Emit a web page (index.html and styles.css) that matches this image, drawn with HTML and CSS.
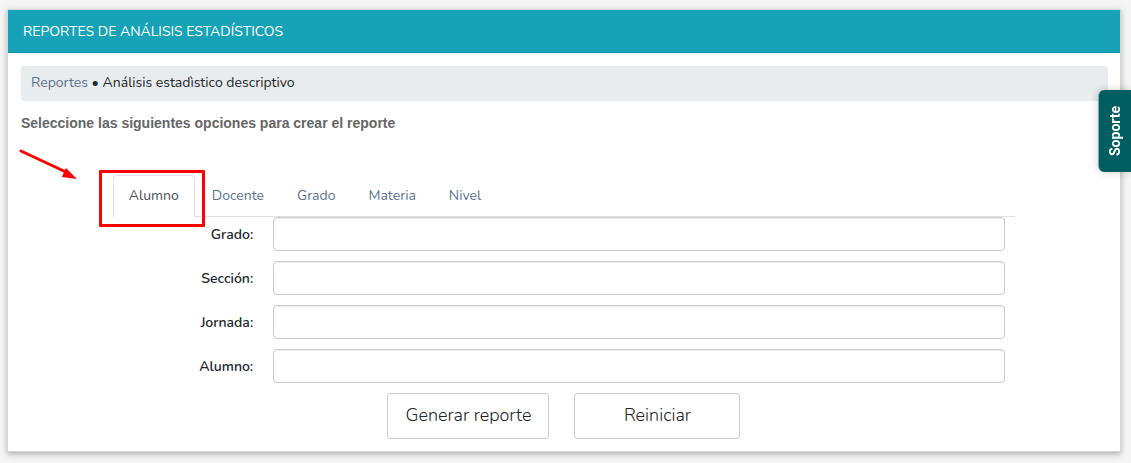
FILE: index.html
```html
<!DOCTYPE html>
<html lang="es">

<head>
	<meta charset="UTF-8" />
	<meta name="viewport" content="width=device-width, initial-scale=1.0" />
	<title>Reportes de análisis estadísticos</title>
	<link rel="stylesheet" href="styles.css">
</head>

<body>
	<main class="card">
		<h1 class="card__header">REPORTES DE ANÁLISIS ESTADÍSTICOS</h1>
		<div class="card__body">
			<nav class="breadcrumb">
				<a class="breadcrumb__link" href="#">Reportes</a> • <span>Análisis estadìstico descriptivo</span>
			</nav>
			<h2 class="card__subtitle">Seleccione las siguientes opciones para crear el reporte</h2>
			<section class="report">
				<nav class="tabs">
					<a class="tabs__link tabs__link--active" href="#">Alumno</a>
					<a class="tabs__link" href="#">Docente</a>
					<a class="tabs__link" href="#">Grado</a>
					<a class="tabs__link" href="#">Materia</a>
					<a class="tabs__link" href="#">Nivel</a>
					<span class="mark"></span>
					<svg class="arrow" width="60" height="32" viewBox="0 0 60 32">
						<path d="M3 2L48 23" fill="none" stroke="#f00" stroke-width="3" stroke-linecap="round" />
						<path d="M48 19L59 30L44 28L46 23Z" fill="#f00" />
					</svg>
				</nav>
				<form class="form">
					<div class="form__group">
						<label class="form__label" for="grado">Grado:</label>
						<div class="form__field"><input class="form__input" type="text" id="grado" name="grado"></div>
					</div>
					<div class="form__group">
						<label class="form__label" for="seccion">Sección:</label>
						<div class="form__field"><input class="form__input" type="text" id="seccion" name="seccion"></div>
					</div>
					<div class="form__group">
						<label class="form__label" for="jornada">Jornada:</label>
						<div class="form__field"><input class="form__input" type="text" id="jornada" name="jornada"></div>
					</div>
					<div class="form__group">
						<label class="form__label" for="alumno">Alumno:</label>
						<div class="form__field"><input class="form__input" type="text" id="alumno" name="alumno"></div>
					</div>
					<div class="form__actions">
						<button class="btn" type="submit">Generar reporte</button>
						<button class="btn btn--wide" type="reset">Reiniciar</button>
					</div>
				</form>
			</section>
		</div>
	</main>
	<button class="support" type="button">Soporte</button>
</body>

</html>
```
FILE: styles.css
```css
:root{
	--primary: #17a2b8;
	--link: #5a7391;
	--text: #212529;
	--line: #dee2e6;
	--mark: #f00;
}

*{
  box-sizing: border-box;
}

body{
  margin: 0;
  padding: 9px 10px 11px 7px;
  background-color: #f5f5f5;
  color: var(--text);
  font-family: Nunito, Lato, sans-serif;
  font-size: 14px;
  line-height: 20px;
}

a{
  color: var(--link);
  text-decoration: none;
}

.card{
  background-color: #fff;
  border: 1px solid #d3d6da;
  box-shadow: 0 2px 6px rgba(0, 0, 0, .3);
}

.card__header{
  margin: 0;
  padding: 12px 15px 10px;
  background-color: var(--primary);
  border-bottom: 1px solid #1591a5;
  color: #fff;
  font-size: 14px;
  font-weight: 400;
}

.card__body{
  padding: 13px 12px 12px 13px;
}

.breadcrumb{
  padding: 7px 10px 8px;
  background-color: #e9ecef;
  border-radius: 3px;
}

.card__subtitle{
  margin: 12px 0 42px;
  color: #666;
  font-family: "Liberation Sans", Arial, sans-serif;
  font-size: 14px;
  font-weight: 700;
}

.report{
  width: 83%;
  margin-left: 8.45%;
}

.tabs{
  position: relative;
  display: flex;
  gap: 1px;
  border-bottom: 1px solid var(--line);
}

.tabs__link{
  margin-bottom: -1px;
  padding: 10px 15px;
  border: 1px solid transparent;
  border-radius: 4px 4px 0 0;
}

.tabs__link--active{
  background-color: #fff;
  border-color: var(--line) var(--line) #fff;
  color: #495057;
}

/* Marca y flecha sobre la pestaña activa */
.mark{
  position: absolute;
  top: -5px;
  left: -14px;
  width: 106px;
  height: 57px;
  border: 3px solid var(--mark);
  border-radius: 1px;
}

.arrow{
  position: absolute;
  top: -26px;
  left: -95px;
}

.form__group{
  display: flex;
  margin-bottom: 10px;
}

.form__label{
  width: 16.667%;
  padding: 8px 10px 0 0;
  font-weight: 600;
  text-align: right;
}

.form__field{
  flex: 1;
  padding: 0 10px;
}

.form__input{
  display: block;
  width: 100%;
  height: 34px;
  padding: 6px 12px;
  border: 1px solid #ccc;
  border-radius: 4px;
  box-shadow: inset 0 1px 1px rgba(0, 0, 0, .075);
  font: inherit;
}

.form__actions{
  display: flex;
  justify-content: center;
  gap: 25px;
}

.btn{
  min-width: 162px;
  padding: 9px 16px 11px;
  background-color: #fff;
  border: 1px solid #ccc;
  border-radius: 3px;
  color: #212529;
  font-family: inherit;
  font-size: 18px;
  font-weight: 300;
  line-height: 24px;
}

.btn--wide{
  min-width: 166px;
}

.support{
  position: fixed;
  top: 90px;
  right: 0;
  width: 33px;
  height: 82px;
  padding: 0;
  background-color: #005e60;
  border: 0;
  border-right: 1px solid #7fb0b0;
  border-radius: 0 6px 6px 0;
  box-shadow: 0 0 8px rgba(0, 0, 0, .2);
  color: #fff;
  font-family: Roboto, sans-serif;
  font-size: 14px;
  font-weight: 700;
  writing-mode: vertical-rl;
  transform: rotate(180deg);
}
```
